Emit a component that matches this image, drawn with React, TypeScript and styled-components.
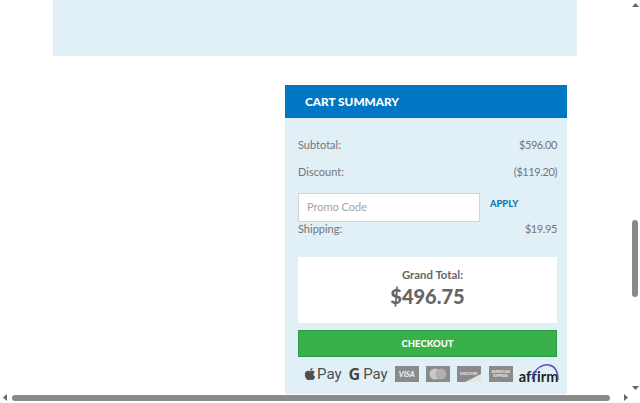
import React from "react";
import styled, { createGlobalStyle } from "styled-components";
import { FaApple } from "react-icons/fa";

const GlobalStyle = createGlobalStyle`
  html, body {
    margin: 0;
    padding: 0;
    background: #fff;
    overflow: hidden;
  }
  * { box-sizing: border-box; }
`;

const Page = styled.div`
  position: relative;
  width: 640px;
  height: 403px;
  overflow: hidden;
  background: #fff;
  font-family: Lato, "Liberation Sans", sans-serif;
  color: #6b6b6b;
`;

const Banner = styled.div`
  width: 524px;
  height: 56px;
  margin-left: 53px;
  background: #e1eff7;
`;

const Card = styled.section`
  width: 282px;
  margin: 29px 0 0 285px;
  background: #e1eff7;
`;

const CardHeader = styled.h2`
  height: 33px;
  margin: 0;
  padding: 0 0 0 20px;
  display: flex;
  align-items: center;
  background: #0077c5;
  color: #fff;
  font-size: 11.8px;
  font-weight: 900;
`;

const CardBody = styled.div`
  padding: 0 10px 7px 13px;
`;

const Row = styled.div<{ $top: number }>`
  display: flex;
  justify-content: space-between;
  align-items: center;
  height: 14px;
  margin-top: ${({ $top }) => $top}px;
  font-size: 11px;
  color: #757575;
`;

const RowValue = styled.span`
  letter-spacing: -0.4px;
`;

const PromoRow = styled.div`
  display: flex;
  margin-top: 15px;
  height: 29px;
`;

const PromoInput = styled.input`
  width: 182px;
  height: 29px;
  padding: 0 8px 2px;
  background: #fff;
  border: 1px solid #d5d5d5;
  border-radius: 0;
  outline: none;
  font-family: inherit;
  font-size: 11px;

  &::placeholder {
    color: #a3a3a3;
    opacity: 1;
  }
`;

const ApplyLink = styled.a`
  margin: 5px 0 0 10px;
  color: #0a78b5;
  font-size: 9.3px;
  font-weight: 900;
`;

const TotalBox = styled.div`
  height: 66px;
  margin-top: 22px;
  padding-top: 11px;
  display: flex;
  flex-direction: column;
  align-items: center;
  background: #fff;
`;

const TotalLabel = styled.div`
  height: 14px;
  margin-left: 10px;
  line-height: 14px;
  font-size: 11.4px;
  font-weight: 700;
  color: #666;
`;

const TotalValue = styled.div`
  margin-top: 2px;
  line-height: 25px;
  font-size: 20px;
  font-weight: 900;
  color: #666;
`;

const CheckoutButton = styled.button`
  display: block;
  width: 100%;
  height: 27px;
  margin-top: 7px;
  padding: 0 0 1px;
  background: #39b04a;
  border: 1px solid #2c9a48;
  border-radius: 0;
  color: #fff;
  font-family: inherit;
  font-size: 9.5px;
  font-weight: 900;
`;

const Payments = styled.div`
  display: flex;
  align-items: center;
  height: 26px;
  margin-top: 4px;
  padding-left: 5px;
`;

const WalletMark = styled.span<{ $left: number }>`
  display: inline-flex;
  align-items: center;
  margin-left: ${({ $left }) => $left}px;
  color: #4f4f4f;
  font-family: Roboto, sans-serif;
  font-size: 15px;
  line-height: 1;
`;

const GoogleG = styled.b`
  margin-right: 3px;
  font-family: "Open Sans", sans-serif;
  font-size: 16px;
  color: #444;
`;

const PayCard = styled.span<{ $left: number }>`
  position: relative;
  display: flex;
  align-items: center;
  justify-content: center;
  flex: none;
  width: 24px;
  height: 16px;
  margin-left: ${({ $left }) => $left}px;
  background: #8a8a8a;
  color: #eee;
  font-size: 7.5px;
  font-weight: 900;
  font-style: italic;
  overflow: hidden;
`;

const SmallCardText = styled.span`
  position: relative;
  font-size: 3.5px;
  font-weight: 700;
  font-style: normal;
  text-align: center;
  line-height: 4px;
`;

const DiscoverCorner = styled.svg`
  position: absolute;
  right: 0;
  bottom: 0;
`;

const Affirm = styled.span`
  position: relative;
  display: inline-block;
  margin-left: 6px;
  padding-top: 6px;
  color: #222;
  font-size: 14.5px;
  font-weight: 700;
  letter-spacing: 0.2px;
  line-height: 14px;
`;

const AffirmArc = styled.svg`
  position: absolute;
  right: -1px;
  top: -1px;
`;

const VerticalBar = styled.div`
  position: absolute;
  top: 220px;
  right: 2px;
  width: 6px;
  height: 77px;
  border-radius: 3px;
  background: #8a8a8a;
`;

const HorizontalBar = styled.div`
  position: absolute;
  left: 12px;
  bottom: 2px;
  width: 598px;
  height: 6px;
  border-radius: 3px;
  background: #8a8a8a;
`;

const ArrowIcon = styled.svg<{ $x: number; $y: number }>`
  position: absolute;
  left: ${({ $x }) => $x}px;
  top: ${({ $y }) => $y}px;
`;

const Arrow = ({ x, y, points }: { x: number; y: number; points: string }) => (
  <ArrowIcon $x={x} $y={y} width="7" height="7" viewBox="0 0 7 7">
    <polygon points={points} fill="#666" />
  </ArrowIcon>
);

const App = () => {
  return (
    <Page>
      <GlobalStyle />
      <Banner />
      <Card>
        <CardHeader>CART SUMMARY</CardHeader>
        <CardBody>
          <Row $top={19}>
            <span>Subtotal:</span>
            <RowValue>$596.00</RowValue>
          </Row>
          <Row $top={13}>
            <span>Discount:</span>
            <RowValue>($119.20)</RowValue>
          </Row>
          <PromoRow>
            <PromoInput placeholder="Promo Code" readOnly />
            <ApplyLink>APPLY</ApplyLink>
          </PromoRow>
          <Row $top={-1}>
            <span>Shipping:</span>
            <RowValue>$19.95</RowValue>
          </Row>
          <TotalBox>
            <TotalLabel>Grand Total:</TotalLabel>
            <TotalValue>$496.75</TotalValue>
          </TotalBox>
          <CheckoutButton>CHECKOUT</CheckoutButton>
          <Payments>
            <WalletMark $left={0}>
              <FaApple size={14} />
              Pay
            </WalletMark>
            <WalletMark $left={7}>
              <GoogleG>G</GoogleG>
              Pay
            </WalletMark>
            <PayCard $left={7}>VISA</PayCard>
            <PayCard $left={7}>
              <svg width="20" height="12" viewBox="0 0 20 12">
                <circle cx="7" cy="6" r="5.5" fill="#c8c8c8" />
                <circle cx="13" cy="6" r="5.5" fill="#b0b0b0" />
              </svg>
            </PayCard>
            <PayCard $left={7}>
              <DiscoverCorner width="24" height="16" viewBox="0 0 24 16">
                <polygon points="24,8 24,16 8,16" fill="#e4e4e4" />
              </DiscoverCorner>
              <SmallCardText>DISCOVER</SmallCardText>
            </PayCard>
            <PayCard $left={8}>
              <SmallCardText>
                AMERICAN
                <br />
                EXPRESS
              </SmallCardText>
            </PayCard>
            <Affirm>
              <AffirmArc width="30" height="18" viewBox="0 0 30 18">
                <path d="M2 16 C4 5 13 1 19 2 C25 3 28 9 28 17" fill="none" stroke="#5a4fc4" strokeWidth="1.4" />
              </AffirmArc>
              affirm
            </Affirm>
          </Payments>
        </CardBody>
      </Card>
      <VerticalBar />
      <HorizontalBar />
      <Arrow x={632} y={2} points="3.5,1 7,5 0,5" />
      <Arrow x={632} y={384} points="0,2 7,2 3.5,6" />
      <Arrow x={2} y={394} points="5,0 5,7 1,3.5" />
      <Arrow x={622} y={394} points="2,0 2,7 6,3.5" />
    </Page>
  );
};

export default App;
